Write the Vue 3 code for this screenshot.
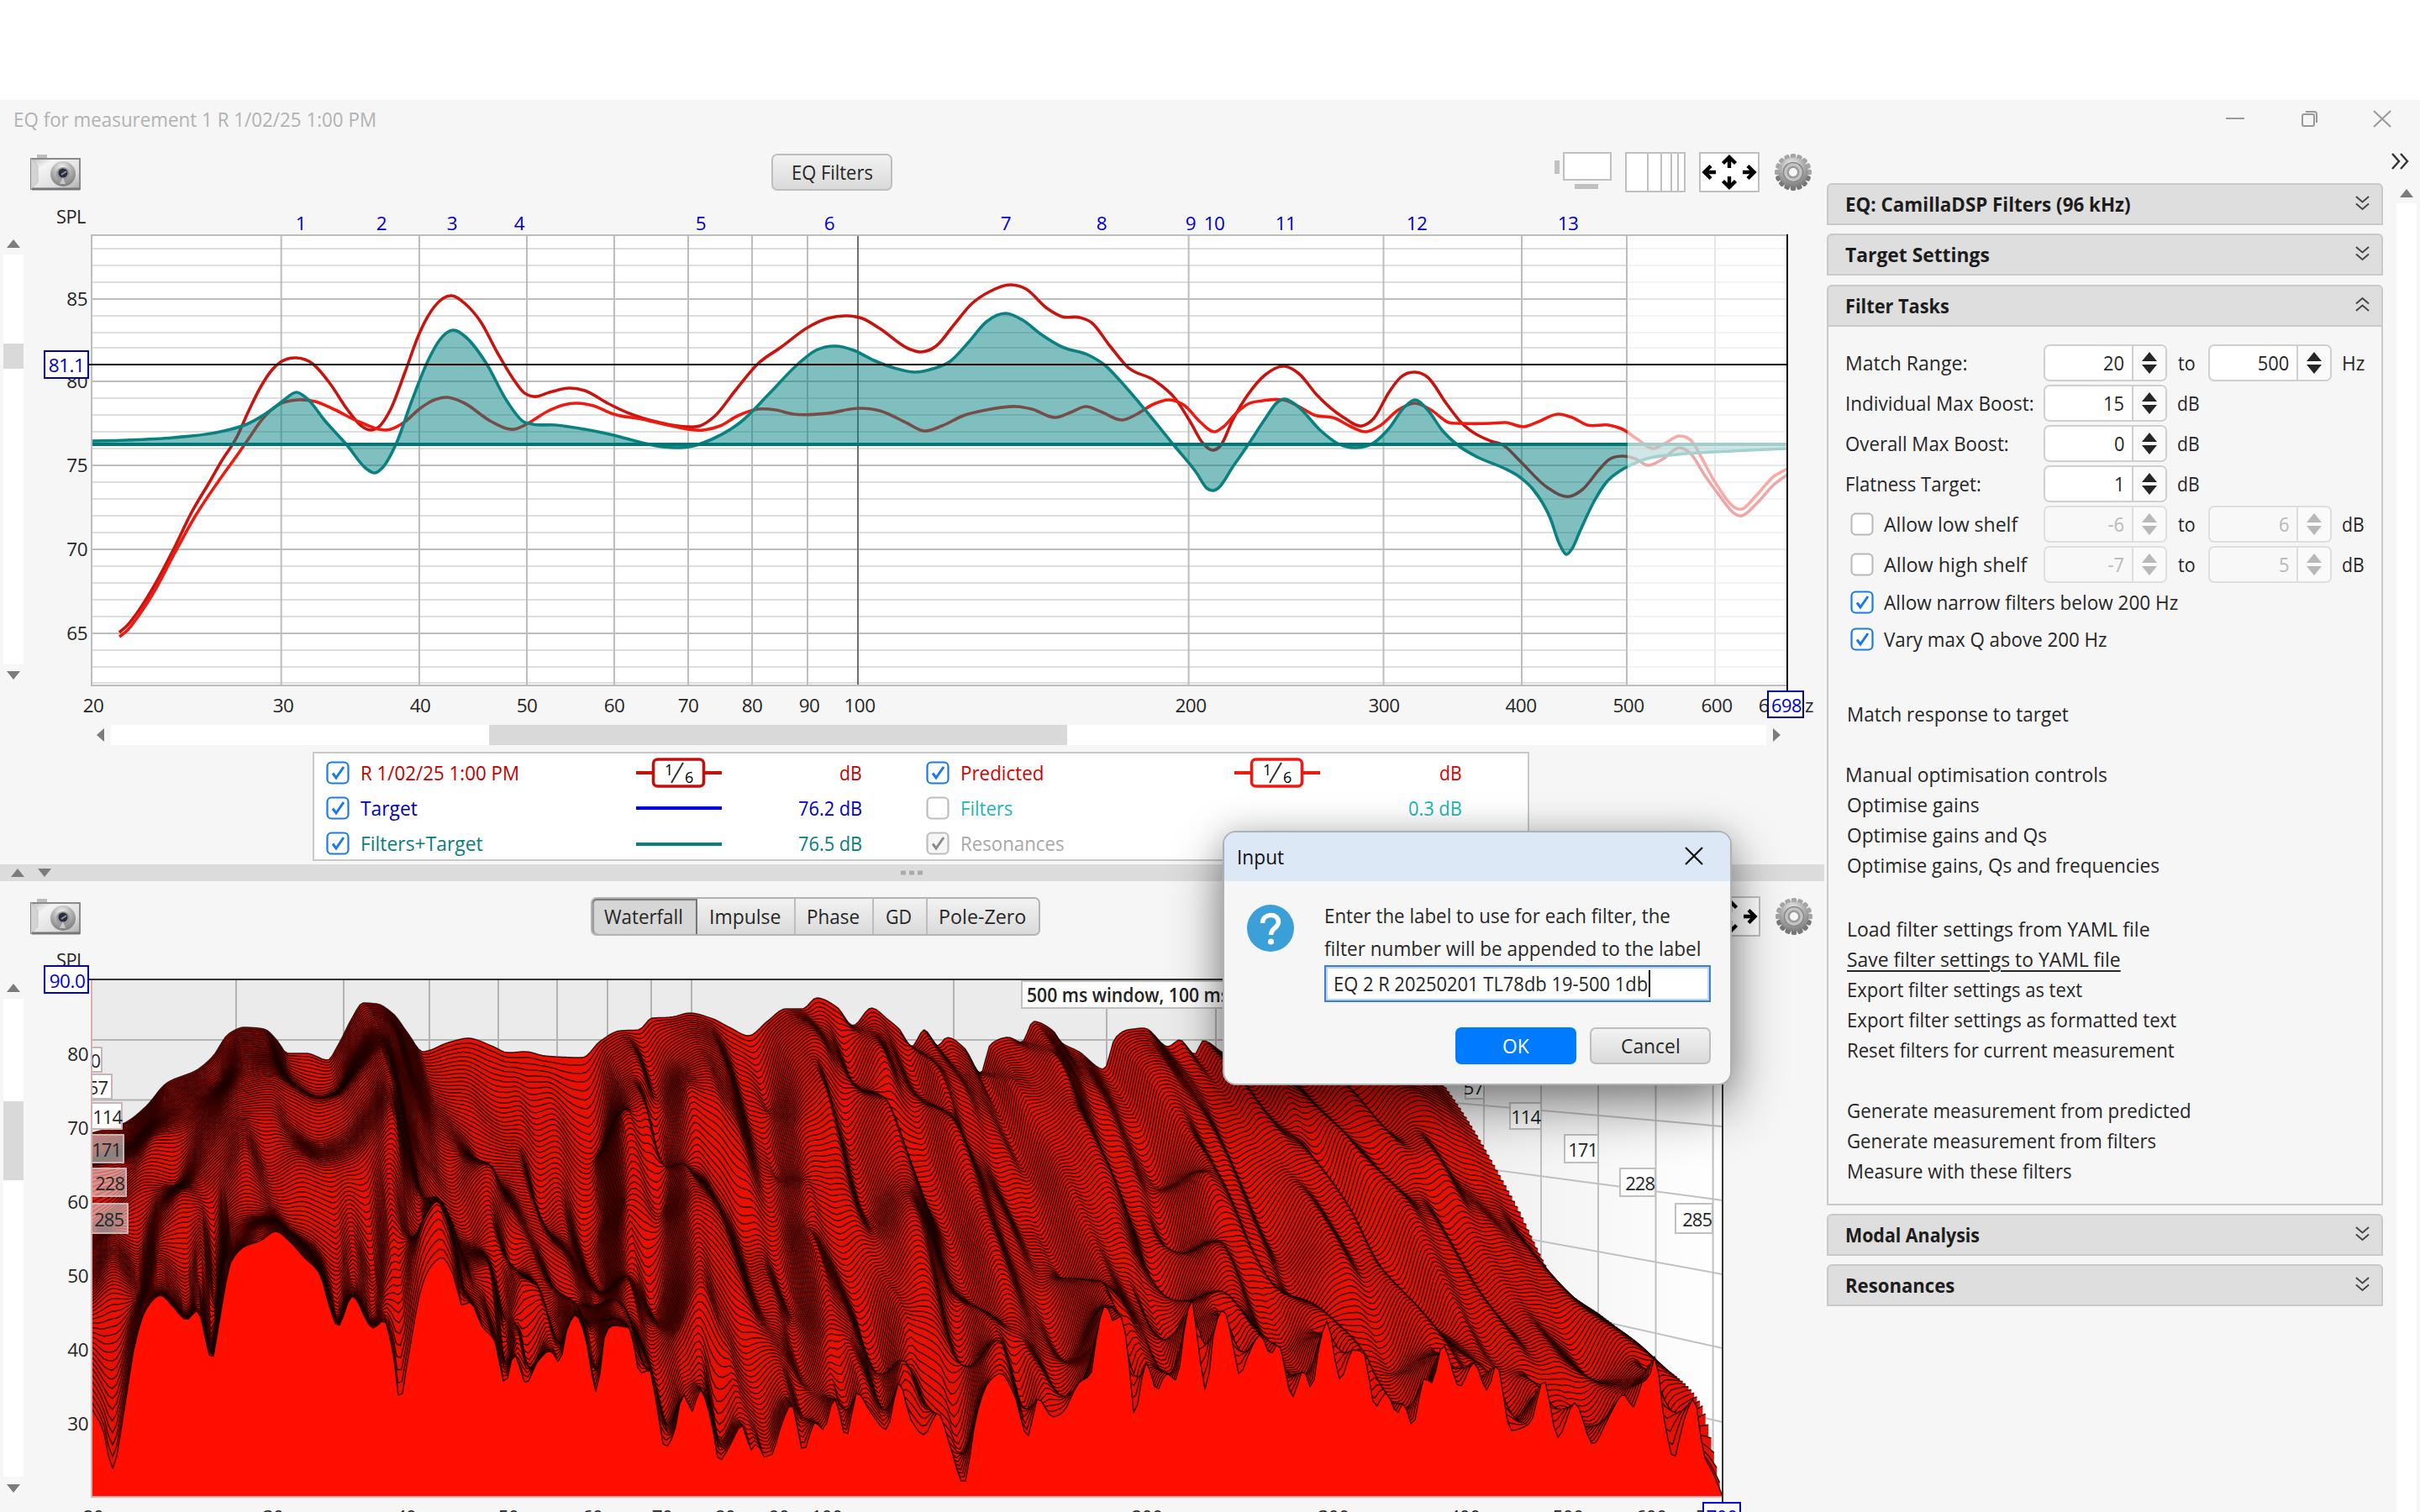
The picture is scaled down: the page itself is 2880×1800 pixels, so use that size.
<script setup>
const vFit = {
  mounted(el, binding) {
    const natural = el.offsetWidth
    if (!natural) return
    el.style.transform = `scaleX(${binding.value / natural})`
    el.style.marginRight = `${binding.value - natural}px`
  },
}

// ---- curve helpers -------------------------------------------------
function pairs(s) {
  return s.trim().split(/\s+/).map((p) => p.split(',').map(Number))
}
function slopes(p) {
  const n = p.length
  const d = []
  for (let i = 0; i < n - 1; i++) d.push((p[i + 1][1] - p[i][1]) / (p[i + 1][0] - p[i][0]))
  const m = [d[0]]
  for (let i = 1; i < n - 1; i++) {
    if (d[i - 1] * d[i] <= 0) m.push(0)
    else {
      const a = p[i][0] - p[i - 1][0]
      const b = p[i + 1][0] - p[i][0]
      m.push((3 * (a + b)) / ((2 * b + a) / d[i - 1] + (b + 2 * a) / d[i]))
    }
  }
  m.push(d[n - 2])
  return m
}
function rounded(p) {
  const n = p.length
  const d = []
  for (let i = 0; i < n - 1; i++) d.push((p[i + 1][1] - p[i][1]) / (p[i + 1][0] - p[i][0]))
  const m = [d[0]]
  for (let i = 1; i < n - 1; i++) {
    const a = p[i][0] - p[i - 1][0]
    const b = p[i + 1][0] - p[i][0]
    m.push((b * d[i - 1] + a * d[i]) / (a + b))
  }
  m.push(d[n - 2])
  return m
}
function smooth(p) {
  const m = rounded(p)
  let s = `M${p[0][0]} ${p[0][1]}`
  for (let i = 0; i < p.length - 1; i++) {
    const h = (p[i + 1][0] - p[i][0]) / 3
    s += `C${(p[i][0] + h).toFixed(1)} ${(p[i][1] + m[i] * h).toFixed(1)} ${(p[i + 1][0] - h).toFixed(1)} ${(p[i + 1][1] - m[i + 1] * h).toFixed(1)} ${p[i + 1][0]} ${p[i + 1][1]}`
  }
  return s
}
function sampler(p) {
  const m = slopes(p)
  return (x) => {
    if (x <= p[0][0]) return p[0][1]
    if (x >= p[p.length - 1][0]) return p[p.length - 1][1]
    let i = 0
    while (x > p[i + 1][0]) i++
    const h = p[i + 1][0] - p[i][0]
    const t = (x - p[i][0]) / h
    const t2 = t * t
    const t3 = t2 * t
    return (2 * t3 - 3 * t2 + 1) * p[i][1] + (t3 - 2 * t2 + t) * h * m[i] + (3 * t2 - 2 * t3) * p[i + 1][1] + (t3 - t2) * h * m[i + 1]
  }
}

// ---- upper chart ----------------------------------------------------
const measured = smooth(pairs(`142,753 151,745 165,727 186,693 207,653 228,610 251,571 263,550 282,520 296,489 310,461 324,440 334,431 353,426 372,433 393,457 413,487 430,507 441,512 451,508 465,487 482,443 499,397 517,365 537,352 554,362 572,383 592,420 610,450 623,467 635,472 654,467 678,462 696,465 723,480 751,493 785,503 816,508 833,507 851,495 875,465 902,433 930,413 961,390 985,379 1008,376 1026,379 1047,391 1081,415 1096,419 1114,412 1135,387 1156,362 1178,347 1203,339 1221,344 1246,367 1264,377 1285,378 1299,384 1321,412 1342,437 1374,453 1399,475 1417,503 1431,527 1444,536 1453,530 1467,500 1485,470 1506,446 1529,436 1546,445 1567,470 1599,497 1621,507 1635,498 1653,467 1667,449 1684,443 1699,449 1721,480 1739,503 1774,525 1789,530 1810,550 1841,580 1868,591 1883,583 1904,558 1915,547 1930,543 1946,546 1961,554 1978,547 1999,533 2013,541 2027,563 2041,583 2073,614 2090,600 2111,577 2127,565`))
const predicted = smooth(pairs(`142,758 151,751 165,733 186,700 207,660 232,615 262,570 280,545 296,522 313,498 331,482 355,476 375,478 399,488 427,502 465,511 482,502 499,487 517,476 532,473 551,479 585,502 612,511 630,503 651,490 671,482 685,480 706,483 730,493 764,499 799,507 837,512 857,507 878,495 902,487 923,488 944,493 985,492 1023,486 1047,489 1080,504 1099,513 1121,507 1146,495 1174,488 1210,484 1228,487 1256,497 1274,491 1292,484 1310,490 1336,500 1353,493 1371,482 1392,476 1410,483 1428,502 1446,514 1456,508 1471,492 1485,481 1503,477 1531,477 1546,484 1564,494 1589,498 1606,507 1626,514 1642,507 1664,488 1684,480 1703,488 1724,503 1739,504 1774,504 1792,503 1814,508 1831,502 1854,493 1871,497 1889,506 1914,506 1931,511 1949,523 1967,534 1981,528 1999,519 2014,526 2024,543 2041,574 2073,606 2090,590 2111,567 2127,558`))
const filterCurve = smooth(pairs(`109,525 150,524 206,521 262,514 296,504 324,487 337,477 353,467 368,477 386,500 413,530 436,558 446,563 455,557 472,527 489,480 510,428 523,405 539,393 554,401 579,433 603,477 623,502 634,505 661,506 696,511 730,518 764,527 789,532 820,532 847,523 882,502 916,468 950,433 971,417 994,412 1016,417 1040,429 1064,438 1089,443 1110,439 1131,430 1153,407 1174,383 1197,373 1217,381 1239,398 1264,413 1296,423 1314,434 1339,460 1367,493 1397,530 1424,563 1436,581 1443,584 1450,581 1467,556 1485,530 1506,498 1520,479 1529,475 1538,479 1546,485 1571,512 1592,528 1614,533 1635,527 1653,510 1671,485 1684,476 1699,488 1717,513 1735,530 1760,545 1789,557 1810,569 1824,582 1845,617 1856,648 1864,660 1871,653 1880,633 1897,597 1911,575 1929,560 1940,554 1960,546 1996,541 2060,537 2127,534`))
const filterFill = filterCurve + 'L2127 529L109 529Z'

const topV = [334.7, 499, 627, 731, 819, 895, 961, 1414.6, 1646.5, 1811, 1936, 2041]
const topMajor = [356, 454, 554, 654, 754]
const topMinor = [296, 316, 336, 376, 396, 414, 474, 494, 514, 534, 574, 594, 614, 634, 674, 694, 714, 734, 774, 794, 813]
const topX = [[20, 111], [30, 337], [40, 500], [50, 627], [60, 731], [70, 819], [80, 895], [90, 963], [100, 1023], [200, 1417], [300, 1647], [400, 1810], [500, 1938], [600, 2043]]
const markers = [358, 454, 538, 618, 834, 987, 1197, 1311, 1417, 1445, 1530, 1686, 1866]

// ---- waterfall -------------------------------------------------------
const L = 109
const SPAN = 1941
const S0 = 0.8187
const depth = (t) => S0 + (1 - S0) * t
const keys = [
  [0, `109,1349 148,1337 173,1318 199,1289 234,1274 253,1258 272,1231 291,1223 314,1225 330,1239 342,1254 365,1254 390,1262 403,1243 419,1212 432,1194 448,1195 467,1206 486,1231 503,1252 534,1241 557,1236 585,1245 604,1253 626,1252 648,1257 693,1259 715,1239 738,1227 760,1226 776,1212 798,1211 821,1206 846,1212 868,1223 891,1233 913,1216 935,1201 955,1201 972,1188 996,1199 1015,1221 1037,1200 1057,1214 1070,1225 1085,1246 1100,1226 1116,1245 1127,1235 1148,1248 1167,1278 1179,1243 1200,1235 1216,1241 1230,1216 1253,1227 1263,1241 1284,1252 1314,1273 1327,1236 1342,1226 1362,1224 1390,1246 1404,1238 1422,1255 1432,1239 1455,1253 1475,1262 1490,1242 1530,1265 1545,1245 1580,1270 1600,1246 1640,1268 1660,1250 1698,1262`],
  [0.14, `109,1380 150,1362 190,1325 225,1305 260,1290 290,1250 320,1252 345,1287 380,1307 400,1300 425,1252 450,1222 470,1232 490,1268 515,1300 560,1312 600,1340 620,1338 640,1352 660,1350 700,1392 715,1372 738,1275 760,1268 780,1296 800,1266 830,1246 860,1262 890,1310 915,1322 940,1252 975,1236 1000,1262 1020,1290 1048,1244 1070,1280 1100,1310 1112,1268 1140,1280 1190,1330 1200,1285 1235,1278 1255,1252 1290,1290 1350,1330 1365,1272 1390,1266 1420,1300 1460,1310 1475,1285 1510,1320 1530,1290 1570,1320 1600,1292 1640,1330 1680,1300 1748,1334`],
  [0.3, `109,1387 150,1380 185,1350 215,1345 250,1320 285,1287 323,1279 345,1290 380,1307 400,1303 425,1275 455,1246 475,1275 495,1310 520,1348 545,1362 575,1390 600,1400 625,1408 645,1455 665,1445 700,1488 718,1460 740,1330 765,1316 788,1400 800,1350 820,1292 850,1300 890,1370 925,1405 945,1330 980,1300 1000,1360 1012,1370 1050,1305 1075,1370 1105,1390 1125,1340 1160,1370 1220,1400 1240,1350 1285,1325 1320,1380 1385,1420 1410,1345 1440,1350 1480,1400 1520,1385 1540,1360 1590,1410 1610,1368 1650,1400 1690,1360 1740,1410 1804,1432`],
  [0.45, `109,1460 135,1440 175,1410 205,1412 245,1362 290,1325 323,1325 345,1342 380,1360 410,1348 440,1310 465,1280 485,1340 510,1390 540,1420 560,1395 582,1385 605,1425 640,1470 665,1480 690,1520 718,1530 745,1430 765,1425 788,1460 811,1380 833,1395 865,1440 900,1490 930,1480 960,1400 990,1395 1030,1450 1069,1390 1095,1410 1130,1470 1150,1420 1190,1440 1240,1480 1270,1400 1320,1400 1350,1460 1400,1490 1430,1400 1470,1430 1520,1480 1560,1440 1600,1440 1640,1485 1670,1430 1720,1470 1780,1465 1858,1533`],
  [0.6, `110,1494 135,1474 164,1488 189,1444 221,1415 240,1418 266,1395 291,1364 320,1394 355,1378 387,1388 419,1380 444,1353 467,1320 485,1380 510,1440 535,1470 560,1480 585,1460 612,1510 635,1500 660,1540 690,1560 715,1570 745,1510 775,1560 800,1500 830,1420 855,1440 890,1515 910,1535 945,1560 965,1480 1000,1510 1040,1500 1085,1440 1115,1500 1155,1540 1175,1480 1230,1530 1270,1530 1300,1465 1350,1500 1400,1560 1440,1470 1490,1500 1540,1550 1580,1500 1640,1520 1690,1560 1710,1505 1770,1550 1830,1535 1912,1570`],
  [0.8, `110,1550 135,1530 164,1540 189,1500 222,1520 240,1490 256,1540 272,1460 291,1450 318,1447 345,1465 370,1480 402,1510 419,1480 444,1520 465,1440 485,1470 505,1480 518,1425 535,1450 560,1510 580,1505 600,1570 620,1522 640,1528 655,1570 680,1545 705,1580 730,1550 760,1590 780,1630 803,1580 835,1530 860,1580 890,1625 920,1600 955,1640 985,1580 1020,1600 1055,1640 1078,1560 1110,1570 1150,1640 1180,1570 1230,1600 1270,1620 1310,1530 1350,1560 1400,1610 1440,1540 1480,1560 1530,1615 1560,1560 1600,1590 1650,1640 1700,1580 1740,1610 1790,1620 1840,1620 1900,1640 1940,1600 1984,1630`],
  [0.93, `110,1620 134,1650 161,1570 173,1545 191,1535 208,1550 222,1565 237,1545 252,1605 268,1500 291,1475 310,1460 328,1458 345,1470 381,1512 402,1570 419,1535 444,1573 460,1550 476,1560 490,1500 505,1450 520,1430 535,1460 552,1535 575,1555 590,1590 603,1625 615,1585 630,1630 655,1590 666,1600 685,1565 710,1630 728,1570 749,1575 765,1625 780,1650 793,1700 815,1650 835,1640 857,1715 880,1680 910,1705 935,1660 957,1690 985,1660 1010,1680 1025,1640 1055,1680 1073,1620 1100,1670 1145,1730 1170,1620 1187,1595 1222,1680 1240,1640 1270,1665 1300,1610 1316,1556 1333,1570 1350,1670 1370,1625 1400,1640 1418,1560 1434,1640 1456,1565 1475,1620 1500,1590 1535,1640 1560,1640 1579,1585 1598,1630 1622,1610 1640,1660 1680,1680 1710,1610 1740,1640 1775,1640 1800,1690 1830,1650 1855,1690 1900,1700 1930,1655 1965,1635 1990,1690 2025,1672`],
  [1, `109,1677 122,1700 134,1748 148,1677 161,1598 173,1560 191,1542 208,1558 222,1571 235,1560 252,1618 263,1560 275,1502 291,1484 310,1477 328,1466 345,1478 361,1496 381,1517 390,1548 402,1579 419,1543 444,1581 457,1572 467,1606 476,1667 486,1614 502,1531 514,1506 526,1497 540,1519 550,1554 559,1550 575,1581 588,1594 601,1647 612,1612 626,1647 639,1622 655,1608 666,1622 674,1585 685,1565 696,1589 710,1657 720,1589 728,1578 749,1581 762,1635 773,1631 782,1676 791,1723 801,1710 813,1660 824,1680 833,1654 846,1689 856,1739 868,1722 883,1697 894,1726 901,1718 909,1734 918,1732 929,1699 942,1672 956,1727 970,1693 980,1702 993,1665 1007,1710 1020,1658 1036,1681 1055,1702 1070,1646 1084,1690 1100,1708 1116,1682 1130,1719 1147,1766 1162,1685 1176,1646 1191,1635 1207,1660 1223,1710 1235,1665 1253,1687 1265,1681 1284,1646 1298,1636 1307,1578 1316,1553 1325,1573 1333,1566 1341,1597 1350,1684 1364,1622 1377,1655 1388,1635 1400,1643 1411,1573 1418,1546 1425,1593 1435,1655 1446,1578 1456,1559 1465,1588 1475,1636 1488,1607 1500,1589 1512,1612 1521,1600 1538,1663 1551,1631 1561,1653 1570,1602 1579,1573 1595,1642 1610,1607 1622,1609 1637,1675 1649,1658 1663,1682 1670,1670 1681,1697 1695,1641 1704,1646 1717,1601 1737,1651 1754,1622 1770,1655 1781,1624 1798,1703 1821,1694 1837,1643 1854,1711 1874,1670 1896,1719 1914,1688 1932,1660 1944,1675 1954,1646 1962,1640 1970,1614 1979,1680 1992,1736 2003,1694 2016,1665 2028,1733 2038,1752 2050,1781`],
].map(([t, s]) => {
  const f = sampler(pairs(s))
  return { t, at: (u) => f(L + (u - L) * depth(t)) }
})

const COUNT = 104
const us = []
for (let u = L; u < L + SPAN; u += 5) us.push(u)
us.push(L + SPAN)
const columns = us.map((u) => sampler(keys.map((k) => [k.t, k.at(u)])))
const slices = []
for (let i = 0; i <= COUNT; i++) {
  const t = i / COUNT
  const s = depth(t)
  const env = Math.sin(Math.PI * t) ** 1.2
  let d = ''
  us.forEach((u, j) => {
    const edge = Math.min(1, Math.max(0, (u - 560) / 250)) * Math.min(1, (L + SPAN - u) / 120)
    const rip = env * edge * (7 * Math.sin(u / 11 + 3 * Math.sin(u / 140) + t * 2.5) + 7 * Math.sin(u / 23 - t * 5 + 1) + 4 * Math.sin(u / 6.5 + t * 7))
    d += `${j ? 'L' : 'M'}${(L + (u - L) * s).toFixed(1)} ${(columns[j](t) + rip).toFixed(1)}`
  })
  slices.push({ line: d, area: `${d}V1781H${L}Z`, fill: i === COUNT ? '#ff0f00' : '#e81000' })
}
const botY = [[80, 1254], [70, 1342], [60, 1430], [50, 1518], [40, 1606], [30, 1694]]
const botX = [[20, 111], [30, 325], [40, 483], [50, 605], [60, 705], [70, 788], [80, 863], [90, 927], [100, 984], [200, 1365], [300, 1587], [400, 1743], [500, 1866], [600, 1965]]
const backV = [281, 409, 511, 593, 663, 723, 775, 823, 1135, 1317, 1447]
const sideV = [1766, 1834, 1902, 1970.5, 2038.6]
const rightTags = [['57', 1744, 1279, 22, 29], ['114', 1797, 1313, 37, 31], ['171', 1862, 1351, 40, 33], ['228', 1928, 1391, 42, 33], ['285', 1994, 1433, 44, 35]]
const leftTags = [['0', 1247, 12, 29, 0.95, 2], ['57', 1279, 24, 29, 0.95, 5], ['114', 1313, 36, 31, 0.95, 0], ['171', 1351, 38, 33, 0.5, 3], ['228', 1391, 41, 33, 0.5, 2], ['285', 1433, 43, 35, 0.5, 5]]

const legend = [
  { name: 'R 1/02/25 1:00 PM', w: 189, color: '#c00000', on: 1, sixth: '#c4100c', val: 'dB', vw: 27 },
  { name: 'Predicted', w: 99, color: '#d80000', on: 1, sixth: '#ee1a10', val: 'dB', vw: 27 },
  { name: 'Target', w: 68, color: '#0000c0', on: 1, line: '#0000e0', val: '76.2 dB', vw: 76 },
  { name: 'Filters', w: 62, color: '#1fb5b5', on: 0, val: '0.3 dB', vw: 64 },
  { name: 'Filters+Target', w: 146, color: '#0a7d7d', on: 1, line: '#0a7f7f', val: '76.5 dB', vw: 76 },
  { name: 'Resonances', w: 124, color: '#a8a8a8', on: 2, val: '', vw: 1 },
]

// ---- sidebar ----------------------------------------------------------
const rows = [
  { label: 'Match Range:', w: 145, a: '20', b: '500', unit: 'Hz' },
  { label: 'Individual Max Boost:', w: 225, a: '15', unit: 'dB' },
  { label: 'Overall Max Boost:', w: 195, a: '0', unit: 'dB' },
  { label: 'Flatness Target:', w: 162, a: '1', unit: 'dB' },
  { label: 'Allow low shelf', w: 159, a: '-6', b: '6', unit: 'dB', off: true },
  { label: 'Allow high shelf', w: 170, a: '-7', b: '5', unit: 'dB', off: true },
]
const links = [
  [['Match response to target', 264]],
  [['Manual optimisation controls', 312], ['Optimise gains', 158], ['Optimise gains and Qs', 238], ['Optimise gains, Qs and frequencies', 372]],
  [['Load filter settings from YAML file', 361], ['Save filter settings to YAML file', 326], ['Export filter settings as text', 280], ['Export filter settings as formatted text', 392], ['Reset filters for current measurement', 390]],
  [['Generate measurement from predicted', 410], ['Generate measurement from filters', 368], ['Measure with these filters', 268]],
]
const teeth = Array.from({ length: 16 }, (_, i) => i * 22.5)
const tabs = [['Waterfall', 125, 94], ['Impulse', 117, 85], ['Phase', 93, 63], ['GD', 64, 31], ['Pole-Zero', 132, 104]]
</script>

<template>
  <div class="app">
    <div class="blank"></div>
    <div class="titlebar">
      <span v-fit="432" class="t">EQ for measurement 1 R 1/02/25 1:00 PM</span>
      <svg class="wbtns" width="240" height="44" viewBox="2640 120 240 44" fill="none" stroke="#999" stroke-width="2">
        <path d="M2649 141H2671M2825 132L2845 151M2845 132L2825 151" />
        <rect x="2740" y="136" width="14" height="14" rx="2" />
        <path d="M2744 133H2754Q2757 133 2757 136V146" />
      </svg>
    </div>
    <div class="body">
      <div class="left">
        <template v-for="pane in 2" :key="pane">
          <div class="toolbar">
            <svg class="cam" width="62" height="46" viewBox="35 181 62 46">
              <defs>
                <linearGradient :id="'cb' + pane" x1="0" y1="0" x2="1" y2="1">
                  <stop offset="0" stop-color="#bbb" /><stop offset=".25" stop-color="#f4f4f4" /><stop offset=".7" stop-color="#ddd" /><stop offset="1" stop-color="#aaa" />
                </linearGradient>
                <radialGradient :id="'cl' + pane" cx=".45" cy=".25" r=".8">
                  <stop offset="0" stop-color="#f0f0f0" /><stop offset=".45" stop-color="#b5b5b5" /><stop offset="1" stop-color="#777" />
                </radialGradient>
              </defs>
              <rect x="44" y="183" width="12" height="5" fill="#bdbdbd" />
              <rect x="37" y="188" width="58" height="36" :fill="`url(#cb${pane})`" stroke="#8a8a8a" stroke-width="2" />
              <path d="M37 188L45 197V216L37 224" fill="#d4d4d4" stroke="#c4c4c4" />
              <path d="M38 224H95" stroke="#777" stroke-width="3" />
              <circle cx="75" cy="206" r="15" :fill="`url(#cl${pane})`" />
              <circle cx="75" cy="206" r="8" fill="#999" />
              <circle cx="75" cy="205" r="5.5" fill="#2b2c3c" />
              <path d="M73 207L79 203" stroke="#8f95b0" stroke-width="2" />
              <path d="M75 210L71 218H78Z" fill="#ddd" opacity=".7" />
            </svg>
            <button v-if="pane === 1" class="btn eqf"><span v-fit="97" class="t">EQ Filters</span></button>
            <div v-else class="tabs">
              <span v-for="(tb, i) in tabs" :key="tb[0]" class="tab" :class="{ active: i === 0 }" :style="{ width: tb[1] + 'px' }"><span v-fit="tb[2]" class="t">{{ tb[0] }}</span></span>
            </div>
            <svg class="tools" width="320" height="56" viewBox="1843 177 320 56" fill="none" stroke="#c0c0c0" stroke-width="2">
              <path d="M1853 191V207M1874 222H1902" stroke-width="6" />
              <rect x="1861" y="182" width="56" height="32" fill="#fff" />
              <rect x="1935" y="182" width="70" height="46" fill="#fff" />
              <path d="M1961 182V228M1977 182V228M1989 182V228M1997 182V228" />
              <rect x="2023" y="182" width="70" height="46" fill="#fff" />
              <g stroke="#000" stroke-width="4.4">
                <path d="M2058 200V187M2050.500 194.500L2058 187L2065.500 194.500" />
                <path d="M2058 210V222M2050.500 215.500L2058 223L2065.500 215.500" />
                <path d="M2042 205H2029M2036 197.500L2028.500 205L2036 212.500" />
                <path d="M2074 205H2087M2080 197.500L2087.500 205L2080 212.500" />
              </g>
              <g stroke="none">
                <rect v-for="a in teeth" :key="a" x="2130.800" y="183" width="6.400" height="10" rx="2" :fill="a > 90 && a < 270 ? '#777' : '#a5a5a5'" :transform="`rotate(${a} 2134 205)`" />
                <circle cx="2134" cy="205" r="17.500" :fill="`url(#cl${pane})`" />
                <circle cx="2134" cy="205" r="11.500" fill="#c4c4c4" stroke="#888" stroke-width="1.500" />
                <circle cx="2134" cy="205" r="7.500" fill="#9a9a9a" />
                <circle cx="2134" cy="205" r="5" fill="#f6f6f6" />
              </g>
            </svg>
          </div>

          <svg v-if="pane === 1" class="chart" width="2171" height="642" viewBox="0 248 2171 642">
            <defs><clipPath id="c1"><rect x="109" y="280" width="2018" height="536" /></clipPath></defs>
            <rect x="109" y="280" width="2018" height="536" fill="#fff" />
            <path :d="topMinor.map((y) => `M109 ${y}H2127`).join('')" stroke="#dedede" stroke-width="2" />
            <path :d="topMajor.map((y) => `M109 ${y}H2127`).join('') + topV.map((x) => `M${x} 280V816`).join('')" stroke="#bdbdbd" stroke-width="2" />
            <path d="M1021 280V816" stroke="#707070" stroke-width="2" />
            <g clip-path="url(#c1)" fill="none" stroke-linejoin="round">
              <path :d="measured" stroke="#c8140e" stroke-width="3.600" />
              <path :d="predicted" stroke="#ee1a10" stroke-width="3.600" />
              <path :d="filterFill" fill="#007f7f" fill-opacity=".5" />
              <path :d="filterCurve" stroke="#0a8080" stroke-width="3.600" />
            </g>
            <path d="M109 529H2127" stroke="#007878" stroke-width="4" />
            <rect x="1937" y="281" width="190" height="534" fill="#fff" opacity=".63" />
            <path d="M109 817V280H2127M109 816H2127" fill="none" stroke="#bdbdbd" stroke-width="2" />
            <path d="M105 434H2127M2127 279V822" stroke="#000" stroke-width="2" />
            <g class="ax">
              <text x="102" y="266" text-anchor="end" textLength="35" lengthAdjust="spacingAndGlyphs">SPL</text>
              <text v-for="(y, i) in topMajor" :key="y" x="104" :y="y + 8" text-anchor="end">{{ 85 - i * 5 }}</text>
              <text v-for="p in topX" :key="p[0]" :x="p[1]" y="848" text-anchor="middle">{{ p[0] }}</text>
              <text x="2099" y="848" text-anchor="middle">6</text>
              <text x="2153" y="848" text-anchor="middle">z</text>
            </g>
            <g class="ax blue">
              <text v-for="(x, i) in markers" :key="x" :x="x" y="274" text-anchor="middle">{{ i + 1 }}</text>
              <rect x="53" y="418" width="52" height="32" fill="#fff" stroke="#0000a8" stroke-width="2" />
              <text x="79" y="443" text-anchor="middle">81.1</text>
              <rect x="2104" y="823" width="42" height="31" fill="#fff" stroke="#0000a8" stroke-width="2" />
              <text x="2126" y="848" text-anchor="middle" textLength="36" lengthAdjust="spacingAndGlyphs">698</text>
            </g>
            <rect x="4" y="303" width="24" height="488" fill="#fff" />
            <rect x="4" y="409" width="24" height="30" fill="#d9d9d9" />
            <path d="M8 295H24L16 285ZM8 799H24L16 809ZM124 867V883L115 875ZM2110 867V883L2119 875Z" fill="#7c7c7c" />
            <rect x="132" y="863" width="1970" height="24" fill="#fff" />
            <rect x="582" y="863" width="688" height="24" fill="#d9d9d9" />
          </svg>

          <template v-if="pane === 1">
            <div class="legend">
              <div v-for="l in legend" :key="l.name" class="lrow">
                <svg class="chk" width="28" height="28" viewBox="0 0 28 28">
                  <rect x="1.500" y="1.500" width="25" height="25" rx="5" :fill="l.on === 2 ? '#f6f6f6' : '#fff'" :stroke="l.on === 1 ? '#1a7ae6' : '#bdbdbd'" stroke-width="2.200" />
                  <path v-if="l.on" d="M8 14.500L12 20L21 7" fill="none" :stroke="l.on === 1 ? '#1a7ae6' : '#8c8c8c'" stroke-width="3" />
                </svg>
                <span v-fit="l.w" class="t nm" :style="{ color: l.color }">{{ l.name }}</span>
                <svg class="ln" width="102" height="40" viewBox="0 0 102 40">
                  <path v-if="l.line" d="M0 20H102" :stroke="l.line" stroke-width="4" />
                  <g v-if="l.sixth">
                    <path d="M0 20H102" :stroke="l.sixth" stroke-width="4" />
                    <rect x="20.500" y="4" width="60" height="32" rx="5" fill="#fff" :stroke="l.sixth" stroke-width="3.600" />
                    <path d="M56 8L42 32" stroke="#333" stroke-width="2" />
                    <text x="34" y="23" font-size="18">1</text>
                    <text x="58" y="32" font-size="18">6</text>
                  </g>
                </svg>
                <span class="val" :style="{ color: l.color }"><span v-if="l.val" v-fit="l.vw" class="t">{{ l.val }}</span></span>
              </div>
            </div>
            <div class="splitter">
              <svg width="2171" height="20" viewBox="0 1029 2171 20">
                <path d="M13 1044H29L21 1034ZM45 1034H61L53 1044Z" fill="#7c7c7c" />
                <path d="M1072 1039H1078M1082 1039H1088M1092 1039H1098" stroke="#aaa" stroke-width="5" />
              </svg>
            </div>
          </template>

          <svg v-else class="chart" width="2171" height="666" viewBox="0 1134 2171 666">
            <defs>
              <linearGradient id="wall" x1="0" x2="1"><stop offset="0" stop-color="#ebebeb" /><stop offset=".8" stop-color="#ebebeb" /><stop offset="1" stop-color="#fff" /></linearGradient>
              <clipPath id="c2"><rect x="109" y="1167" width="1942" height="615" /></clipPath>
            </defs>
            <rect x="109" y="1166" width="1941" height="615" fill="url(#wall)" />
            <g stroke="#b4b4b4" stroke-width="2">
              <path :d="backV.map((x) => `M${x} 1167V1400`).join('') + 'M109 1238H1698M109 1309.500H400'" />
              <path :d="sideV.map((x) => `M${x} 1167V1781`).join('')" stroke="#c0c0c0" />
              <path d="M1698 1310L2050 1341M1698 1382L2050 1429M1698 1453L2050 1517M1698 1526L2050 1605M1950 1669L2050 1693" stroke="#c0c0c0" />
            </g>
            <g v-for="r in rightTags" :key="r[0]" class="ax tag">
              <rect :x="r[1]" :y="r[2]" :width="r[3]" :height="r[4]" fill="#fff" fill-opacity=".9" stroke="#c0c0c0" stroke-width="2" />
              <text :x="r[1] + r[3] - 1" :y="r[2] + r[4] / 2 + 9" text-anchor="end">{{ r[0] }}</text>
            </g>
            <g clip-path="url(#c2)" stroke-linejoin="round">
              <template v-for="(s, i) in slices" :key="i">
                <path :d="s.area" :fill="s.fill" />
                <path :d="s.line" fill="none" stroke="#120000" stroke-opacity=".84" stroke-width="1.500" />
              </template>
              <g v-for="r in leftTags" :key="r[0]" class="ax tag">
                <rect x="107" :y="r[1]" :width="r[2] + 2" :height="r[3]" fill="#fff" :fill-opacity="r[4]" stroke="#c8b4b4" stroke-width="2" />
                <text :x="109 + r[2] - r[5]" :y="r[1] + r[3] / 2 + 9" text-anchor="end">{{ r[0] }}</text>
              </g>
            </g>
            <rect x="1216" y="1168" width="300" height="32" fill="#fff" stroke="#c0c0c0" stroke-width="2" />
            <text x="1222" y="1193" class="wl" textLength="284" lengthAdjust="spacingAndGlyphs">500 ms window, 100 ms rise</text>
            <path d="M109 1167V1782H2050" fill="none" stroke="#d9b0b0" stroke-width="2" />
            <path d="M105 1166H2050V1800" fill="none" stroke="#333" stroke-width="2" />
            <g class="ax">
              <text x="102" y="1151" text-anchor="end" textLength="35" lengthAdjust="spacingAndGlyphs">SPL</text>
              <text v-for="p in botY" :key="p[0]" x="105" :y="p[1] + 8.500" text-anchor="end">{{ p[0] }}</text>
              <text v-for="p in botX" :key="p[0]" :x="p[1]" y="1814" text-anchor="middle">{{ p[0] }}</text>
              <text x="2025" y="1814" text-anchor="middle">7</text>
            </g>
            <g class="ax blue">
              <rect x="53" y="1150" width="52" height="32" fill="#fff" stroke="#0000d0" stroke-width="2" />
              <text x="80" y="1176" text-anchor="middle">90.0</text>
              <rect x="2027" y="1789" width="44" height="32" fill="#fff" stroke="#0000d0" stroke-width="2" />
              <text x="2049" y="1814" text-anchor="middle">700</text>
            </g>
            <rect x="4" y="1189" width="24" height="569" fill="#fff" />
            <rect x="4" y="1311" width="24" height="94" fill="#d9d9d9" />
            <path d="M8 1181H24L16 1171ZM8 1767H24L16 1777Z" fill="#7c7c7c" />
          </svg>
        </template>
      </div>

      <div class="side">
        <div class="sidetop">
          <svg width="24" height="22" viewBox="0 0 24 22" fill="none" stroke="#333" stroke-width="2.400"><path d="M2 2L10 11L2 20M12 2L20 11L12 20" /></svg>
        </div>
        <div class="sidebody">
          <div class="panels">
            <div class="head"><span v-fit="340" class="t">EQ: CamillaDSP Filters (96 kHz)</span><svg class="chev" viewBox="0 0 18 20"><path d="M1 2L9 9L17 2M1 11L9 18L17 11" /></svg></div>
            <div class="head"><span v-fit="172" class="t">Target Settings</span><svg class="chev" viewBox="0 0 18 20"><path d="M1 2L9 9L17 2M1 11L9 18L17 11" /></svg></div>
            <div class="head open"><span v-fit="124" class="t">Filter Tasks</span><svg class="chev" viewBox="0 0 18 20"><path d="M1 9L9 2L17 9M1 18L9 11L17 18" /></svg></div>
            <div class="tasks">
              <div v-for="r in rows" :key="r.label" class="row">
                <div class="lab">
                  <svg v-if="r.off" class="cb" width="28" height="28" viewBox="0 0 28 28"><rect x="1.500" y="1.500" width="25" height="25" rx="5" fill="#fff" stroke="#b8b8b8" stroke-width="2" /></svg>
                  <span v-fit="r.w" class="t">{{ r.label }}</span>
                </div>
                <template v-for="(v, i) in [r.a, r.b]" :key="i">
                  <template v-if="v">
                    <span v-if="i" class="to"><span v-fit="21" class="t">to</span></span>
                    <div class="spin" :class="{ off: r.off }">
                      <span class="num"><span class="t">{{ v }}</span></span>
                      <span class="arr"><svg width="18" height="28" viewBox="0 0 18 28"><path d="M0 12H18L9 1ZM0 16H18L9 27Z" /></svg></span>
                    </div>
                  </template>
                </template>
                <span class="unit"><span v-fit="27" class="t">{{ r.unit }}</span></span>
              </div>
              <div class="row c1">
                <svg class="cb" width="28" height="28" viewBox="0 0 28 28"><rect x="1.500" y="1.500" width="25" height="25" rx="5" fill="#fff" stroke="#1a7ae6" stroke-width="2.200" /><path d="M8 14.500L12 20L21 7" fill="none" stroke="#1a7ae6" stroke-width="3" /></svg>
                <span v-fit="350" class="t">Allow narrow filters below 200 Hz</span>
              </div>
              <div class="row c2">
                <svg class="cb" width="28" height="28" viewBox="0 0 28 28"><rect x="1.500" y="1.500" width="25" height="25" rx="5" fill="#fff" stroke="#1a7ae6" stroke-width="2.200" /><path d="M8 14.500L12 20L21 7" fill="none" stroke="#1a7ae6" stroke-width="3" /></svg>
                <span v-fit="266" class="t">Vary max Q above 200 Hz</span>
              </div>
              <div class="links">
                <div v-for="(g, i) in links" :key="i" class="grp">
                  <div v-for="k in g" :key="k[0]" class="lk" :class="{ u: k[0].startsWith('Save'), out: k[0].startsWith('Manual') }"><span v-fit="k[1]" class="t">{{ k[0] }}</span></div>
                </div>
              </div>
            </div>
            <div class="head"><span v-fit="160" class="t">Modal Analysis</span><svg class="chev" viewBox="0 0 18 20"><path d="M1 2L9 9L17 2M1 11L9 18L17 11" /></svg></div>
            <div class="head"><span v-fit="130" class="t">Resonances</span><svg class="chev" viewBox="0 0 18 20"><path d="M1 2L9 9L17 2M1 11L9 18L17 11" /></svg></div>
          </div>
          <div class="vscroll">
            <svg width="16" height="10" viewBox="0 0 16 10"><path d="M0 10H16L8 0Z" fill="#7c7c7c" /></svg>
            <div class="track"></div>
          </div>
        </div>
      </div>
    </div>

    <div class="dialog">
      <div class="dtitle">
        <span v-fit="56" class="t">Input</span>
        <svg width="22" height="22" viewBox="0 0 22 22" stroke="#111" stroke-width="2.200"><path d="M1 1L21 21M21 1L1 21" /></svg>
      </div>
      <div class="dbody">
        <svg class="q" width="56" height="56" viewBox="0 0 56 56">
          <circle cx="28" cy="28" r="28" fill="#3b9fd8" />
          <path d="M18.500 22C18.500 9.500 37.500 9.500 37.500 20.500C37.500 28 28.500 27.500 28.500 36" fill="none" stroke="#fff" stroke-width="5.500" />
          <circle cx="28.500" cy="44" r="3.600" fill="#fff" />
        </svg>
        <div class="dmain">
          <div class="dl"><span v-fit="412" class="t">Enter the label to use for each filter, the</span></div>
          <div class="dl"><span v-fit="448" class="t">filter number will be appended to the label</span></div>
          <div class="field"><span v-fit="374" class="t">EQ 2 R 20250201 TL78db 19-500 1db</span><i></i></div>
          <div class="dbtns">
            <button class="btn ok"><span v-fit="32" class="t">OK</span></button>
            <button class="btn"><span v-fit="71" class="t">Cancel</span></button>
          </div>
        </div>
      </div>
    </div>
  </div>
</template>

<style>
html,
body {
  margin: 0;
  background: #f6f6f6;
  overflow: hidden;
}
</style>

<style scoped>
.app {
  position: relative;
  width: 2880px;
  height: 1800px;
  overflow: hidden;
  background: #f6f6f6;
  color: #262626;
  font-family: 'Open Sans', 'Noto Sans', sans-serif;
  font-size: 23.5px;
  line-height: 32px;
}
svg { display: block; flex: none; }
.t { display: inline-block; flex: none; white-space: nowrap; transform-origin: 0 50%; }
.blank { height: 119px; background: #fff; }
.titlebar { display: flex; align-items: center; justify-content: space-between; height: 45px; padding-left: 16px; color: #b2b2b2; }
.body { display: flex; height: 1636px; }
.left { width: 2171px; flex: none; display: flex; flex-direction: column; }
.toolbar { display: flex; align-items: center; box-sizing: border-box; height: 84px; flex: none; padding: 0 0 2px 35px; }
.chart { overflow: visible; }
.btn {
  display: flex; align-items: center; justify-content: center; box-sizing: border-box;
  width: 144px; height: 44px; padding: 0; border: 2px solid #bebebe; border-radius: 7px;
  background: linear-gradient(#f2f2f2, #dadada); color: #262626; font: inherit;
}
.eqf { margin-left: 821px; margin-right: 781px; }
.tabs {
  display: flex; box-sizing: border-box; width: 535px; height: 46px; margin-left: 606px; margin-right: 606px;
  border: 2px solid #b4b4b4; border-radius: 7px; background: linear-gradient(#f2f2f2, #dadada);
}
.tab { display: flex; box-sizing: border-box; align-items: center; justify-content: center; border-right: 2px solid #bdbdbd; flex: none; }
.tab:last-child { border-right: 0; }
.tab.active { background: #d6d6d6; border-right-color: #777; box-shadow: inset 0 2px 1px #777, inset 2px 0 1px #999; border-radius: 5px 0 0 5px; }
.tab .t { position: relative; left: -1px; }
.ax { font-size: 22.5px; fill: #262626; letter-spacing: -0.5px; }
.ax.blue { fill: #0000c8; }
.tag { font-size: 22px; letter-spacing: -1px; }
.wl { font-size: 23.5px; fill: #222; font-weight: 600; }
.legend {
  display: grid; grid-template-columns: 714px 1fr; grid-template-rows: repeat(3, 42.300px); box-sizing: border-box;
  width: 1448px; height: 130px; margin: 5px 0 4px 372px; border: 2px solid #c8c8c8; background: #fff; padding-left: 14px; flex: none;
}
.lrow { display: flex; align-items: center; position: relative; height: 45px; }
.nm { margin-left: 13px; }
.ln { position: absolute; left: 369px; top: 3px; }
.lrow:nth-child(even) .ln { left: 367px; }
.val { display: flex; position: absolute; right: 76px; }
.lrow:nth-child(even) .val { right: 78px; }
.splitter { height: 20px; background: #dcdcdc; flex: none; margin-bottom: 1px; }
.side { flex: 1; padding-left: 3px; }
.sidetop { height: 54px; display: flex; justify-content: flex-end; padding: 0 11px 0 0; align-items: flex-start; box-sizing: border-box; }
.sidetop svg { margin-top: 17px; }
.sidebody { display: flex; }
.panels { width: 662px; }
.head {
  display: flex; align-items: center; justify-content: space-between; box-sizing: border-box; height: 50px; margin-bottom: 10.300px;
  padding: 0 14px 0 20px; border: 2px solid #c9c9c9; border-radius: 6px 6px 0 0; background: #dedede; font-weight: 700; color: #1c1c1c;
}
.head.open { margin-bottom: 0; }
.chev { width: 17px; height: 19px; margin-top: -3px; fill: none; stroke: #444; stroke-width: 2; }
.tasks { box-sizing: border-box; height: 1046px; margin-bottom: 10.500px; padding: 19px 0 0 20px; border: 2px solid #c9c9c9; border-top: 0; }
.row { display: flex; align-items: center; height: 48px; }
.lab { display: flex; align-items: center; width: 236px; flex: none; }
.cb { margin: 0 12px 0 6px; }
.spin { display: flex; box-sizing: border-box; width: 147px; height: 44px; border: 2px solid #cfcfcf; border-radius: 7px; background: #fff; overflow: hidden; flex: none; }
.num { display: flex; align-items: center; justify-content: flex-end; width: 105px; padding-right: 9px; box-sizing: border-box; border-right: 2px solid #cfcfcf; flex: none; }
.num .t { transform: scaleX(0.93); transform-origin: 100% 50%; }
.arr { flex: 1; display: flex; align-items: center; justify-content: center; background: #fafafa; }
.arr svg { fill: #262626; }
.spin.off { background: #f8f8f8; border-color: #dedede; color: #b8b8b8; }
.spin.off .num { border-color: #dedede; }
.spin.off .arr svg { fill: #b8b8b8; }
.to { width: 49px; padding-left: 13px; box-sizing: border-box; }
.unit { padding-left: 12px; }
.row.c1 { height: 44px; margin-top: -1px; }
.row.c2 { height: 44px; }
.links { padding: 49px 0 0 2px; }
.grp { margin-bottom: 38px; }
.grp:nth-child(1), .grp:nth-child(3) { margin-bottom: 36px; }
.grp:nth-child(2) { margin-bottom: 40px; }
.lk { height: 36px; line-height: 36px; }
.lk.out { margin-left: -2px; }
.lk.u .t { text-decoration: underline; text-decoration-thickness: 2px; text-underline-offset: 4px; }
.vscroll { display: flex; flex-direction: column; align-items: center; width: 24px; margin-left: 16px; padding-top: 7px; }
.track { width: 24px; height: 1560px; margin-top: 7px; background: #fff; }
.dialog {
  position: absolute; left: 1455px; top: 989px; box-sizing: border-box; width: 606px; height: 303px; border: 2px solid #adb1b6; border-radius: 16px;
  background: #f6f6f6; overflow: hidden; box-shadow: 0 26px 64px rgba(0, 0, 0, 0.45), 0 2px 36px rgba(0, 0, 0, 0.16);
}
.dtitle { display: flex; align-items: center; justify-content: space-between; height: 58px; padding: 0 32px 0 15px; background: #dce8f6; color: #111; }
.dtitle svg { margin-top: -3px; }
.dbody { display: flex; padding-left: 27px; }
.q { margin-top: 28px; }
.dmain { margin-left: 36px; padding-top: 22px; width: 460px; }
.dl { height: 39px; line-height: 39px; }
.field { display: flex; align-items: center; box-sizing: border-box; height: 44px; border: 2px solid #3f7fd0; box-shadow: inset 0 0 0 2px #b9d6fa; background: #fff; padding-left: 9px; }
.field i { width: 2px; height: 32px; margin-left: 1px; background: #000; }
.dbtns { display: flex; justify-content: flex-end; gap: 16px; margin-top: 30px; }
.ok { background: #007aff; border-color: #007aff; color: #fff; }
</style>
